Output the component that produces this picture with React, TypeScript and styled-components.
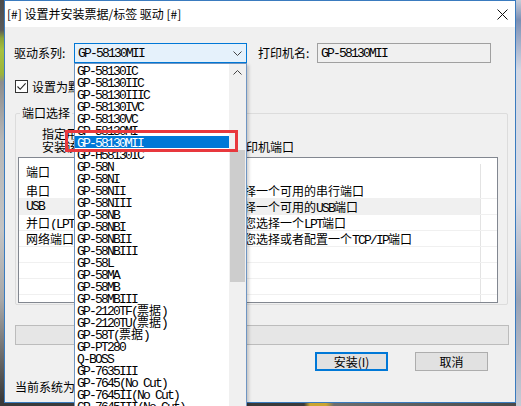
import React from 'react';
import styled, { createGlobalStyle } from 'styled-components';

const GlobalStyle = createGlobalStyle`
    body {
        margin: 0;
        background: #2f2f2f;
        font-family: "Noto Sans CJK SC", "Noto Sans", sans-serif;
        font-size: 12px;
        color: #000;
    }
`;

const UI = `"Noto Sans CJK SC", "Noto Sans", sans-serif`;
const MONO = `"Liberation Mono", "Noto Sans CJK SC", monospace`;

const Desktop = styled.div`
    width: 521px;
    height: 406px;
    overflow: hidden;
    display: grid;
    grid-template-columns: 4px 512px 5px;
    grid-template-rows: 403px 3px;
`;

const LeftStrip = styled.div`
    grid-row: 1 / 3;
    background: linear-gradient(
        to bottom,
        #4b4b4b 0px, #5a5a5a 30px, #8aa23a 38px, #a6c13f 50px, #9bb43b 74px,
        #8d8d8d 82px, #b7b7b7 140px, #c4c4c4 230px, #a8a8a8 300px, #3a3a3a 400px
    );
`;

const RightStrip = styled.div`
    grid-row: 1 / 3;
    grid-column: 3;
    background: linear-gradient(
        to bottom,
        #c9ced9 0px, #7a8fb5 20px, #d3d8e4 70px, #d7dbe6 200px, #9aa3b5 300px, #c6cbd6 406px
    );
`;

const BottomStrip = styled.div`
    grid-row: 2;
    grid-column: 2;
    background: linear-gradient(
        to right,
        #3a3a3a 0px, #3a3a3a 300px, #c9a431 306px, #c9a431 322px, #6d6d6d 330px, #4a4a4a 512px
    );
`;

const Window = styled.div`
    grid-row: 1;
    grid-column: 2;
    box-sizing: border-box;
    border: 1px solid #3a7bbf;
    background: #f0f0f0;
    display: flex;
    flex-direction: column;
    font-family: ${UI};
`;

const TitleBar = styled.div`
    height: 26px;
    background: #fff;
    display: flex;
    align-items: center;
    justify-content: space-between;
    padding: 0 7px 0 2px;
    line-height: 26px;
`;

const CloseIcon = () => (
    <svg width="11" height="11" viewBox="0 0 11 11">
        <path d="M0.5 0.5 L10.5 10.5 M10.5 0.5 L0.5 10.5" stroke="#111" strokeWidth="1" fill="none" />
    </svg>
);

const Body = styled.div`
    display: flex;
    flex-direction: column;
    padding: 16px 8px 0 9px;
`;

const FieldRow = styled.div`
    display: flex;
    align-items: center;
    height: 20px;
`;

const Label = styled.span<{ $w: number; $ml?: number }>`
    width: ${p => p.$w}px;
    margin-left: ${p => p.$ml || 0}px;
    line-height: 20px;
    white-space: nowrap;
`;

const Combo = styled.div`
    position: relative;
    box-sizing: border-box;
    width: 173px;
    height: 20px;
    border: 1px solid #0078d7;
    background: #e5f1fb;
    display: flex;
    align-items: center;
    justify-content: space-between;
    padding: 0 4px 0 3px;
`;

const Mono = styled.span`
    font-family: ${MONO};
    font-size: 13px;
    letter-spacing: -1.8px;
    white-space: nowrap;
`;

const Han = styled.span`
    font-family: ${UI};
    font-size: 12px;
    letter-spacing: 0;
`;

const TextBox = styled.div`
    box-sizing: border-box;
    width: 174px;
    height: 20px;
    border: 1px solid #a0a0a0;
    background: #f0f0f0;
    padding-left: 3px;
    display: flex;
    align-items: center;
`;

const CheckRow = styled.label`
    display: flex;
    align-items: center;
    gap: 4px;
    height: 13px;
    margin: 17px 0 0 1px;
    line-height: 13px;
`;

const CheckBox = styled.span`
    box-sizing: border-box;
    width: 13px;
    height: 13px;
    border: 1px solid #333;
    background: #fff;
    display: flex;
    align-items: center;
    justify-content: center;
`;

const Group = styled.fieldset`
    box-sizing: border-box;
    width: 493px;
    margin: 12px 0 0 1px;
    padding: 0 0 1px 2px;
    border: 1px solid #dcdcdc;
    border-radius: 2px;
    min-width: 0;
`;

const Legend = styled.legend`
    margin-left: 2px;
    padding: 0 2px;
    line-height: 16px;
`;

const Hint = styled.div`
    padding: 6px 0 0 24px;
    line-height: 13px;
    white-space: nowrap;
    overflow: hidden;
`;

const ListView = styled.div`
    box-sizing: border-box;
    width: 480px;
    height: 146px;
    margin-top: 4px;
    border: 1px solid #828790;
    background: #fff;
    overflow: hidden;
    font-family: ${MONO};
`;

const HeaderRow = styled.div`
    display: flex;
    height: 25px;
    padding-top: 6px;
    box-sizing: border-box;
`;

const Row = styled.div<{ $hot?: boolean }>`
    display: flex;
    height: 16px;
    box-sizing: border-box;
    border-bottom: 1px solid #f0f0f0;
    background: ${p => (p.$hot ? '#f0f0f0' : '#fff')};
`;

const Cell = styled.div<{ $w: number; $last?: boolean }>`
    width: ${p => p.$w}px;
    flex: none;
    box-sizing: border-box;
    padding-left: ${p => (p.$last ? 0 : 7)}px;
    line-height: 15px;
    white-space: nowrap;
    overflow: hidden;
    ${p => p.$last && 'border-left: 1px solid #e3e3e3; background: #fff;'}
`;

const StatusBox = styled.div`
    box-sizing: border-box;
    width: 494px;
    height: 20px;
    margin: 20px 0 0 1px;
    border: 1px solid #bcbcbc;
    background: #e6e6e6;
`;

const ButtonRow = styled.div`
    display: flex;
    gap: 27px;
    margin-top: 7px;
    padding-left: 301px;
`;

const Button = styled.button<{ $default?: boolean }>`
    box-sizing: border-box;
    width: 73px;
    height: 19px;
    padding: 0;
    font-family: ${UI};
    font-size: 12px;
    line-height: 15px;
    background: #e1e1e1;
    border: 1px solid ${p => (p.$default ? '#0078d7' : '#adadad')};
    box-shadow: ${p => (p.$default ? 'inset 0 0 0 1px #0078d7' : 'none')};
    color: #000;
`;

const Footer = styled.div`
    margin: 8px 0 0 1px;
    line-height: 16px;
    white-space: nowrap;
`;

/* the open drop-down of the combo */
const DropList = styled.div`
    position: absolute;
    top: 19px;
    left: -1px;
    box-sizing: border-box;
    width: 173px;
    height: 360px;
    border: 1px solid #6f95c2;
    background: #fff;
    display: flex;
    box-shadow: 2px 2px 3px rgba(0, 0, 0, 0.18);
    z-index: 5;
`;

const Items = styled.div`
    flex: 1;
    display: flex;
    flex-direction: column;
`;

const Item = styled.div<{ $sel?: boolean }>`
    height: 12px;
    line-height: 12px;
    padding-left: 2px;
    background: ${p => (p.$sel ? '#0078d7' : 'transparent')};
    color: ${p => (p.$sel ? '#fff' : '#000')};
`;

const ScrollBar = styled.div`
    width: 17px;
    flex: none;
    background: #f0f0f0;
    display: flex;
    flex-direction: column;
`;

const ArrowBtn = styled.div`
    height: 17px;
    display: flex;
    align-items: center;
    justify-content: center;
`;

const Thumb = styled.div`
    margin: 69px 0 0 1px;
    width: 15px;
    height: 132px;
    background: #cdcdcd;
`;

const Mark = styled.div`
    position: absolute;
    left: -10px;
    top: 66px;
    box-sizing: border-box;
    width: 173px;
    height: 22px;
    border: 3px solid #e8383d;
    pointer-events: none;
`;

const cjk = (s: string) =>
    s.split(/([\u3000-\u9fff\uff00-\uffef]+)/).map((part, i) =>
        /[\u3000-\u9fff\uff00-\uffef]/.test(part) ? <Han key={i}>{part}</Han> : part
    );

const models = [
    'GP-58130IC', 'GP-58130IIC', 'GP-58130IIIC', 'GP-58130IVC', 'GP-58130VC', 'GP-58130MI',
    'GP-58130MII', 'GP-H58130IC', 'GP-58N', 'GP-58NI', 'GP-58NII', 'GP-58NIII', 'GP-58NB',
    'GP-58NBI', 'GP-58NBII', 'GP-58NBIII', 'GP-58L', 'GP-58MA', 'GP-58MB', 'GP-58MBIII',
    'GP-2120TF(票据)', 'GP-2120TU(票据)', 'GP-58T(票据)', 'GP-PT280', 'Q-BOSS', 'GP-7635III',
    'GP-7645(No Cut)', 'GP-7645II(No Cut)', 'GP-7645III(No Cut)', 'GP-7645IV(No Cut)',
];

const ports = [
    ['串口', '请选择一个可用的串行端口'],
    ['USB', '请选择一个可用的USB端口'],
    ['并口(LPT)', '将为您选择一个LPT端口'],
    ['网络端口', '将为您选择或者配置一个TCP/IP端口'],
];

const COLS = [194, 267, 17];

const Chevron = ({ up }: { up?: boolean }) => (
    <svg width="9" height="5" viewBox="0 0 9 5">
        <path d={up ? 'M0.5 4.5 L4.5 0.5 L8.5 4.5' : 'M0.5 0.5 L4.5 4.5 L8.5 0.5'} stroke="#444" strokeWidth="1" fill="none" />
    </svg>
);

const App = () => {
    return (
        <Desktop>
            <GlobalStyle />
            <LeftStrip />
            <Window>
                <TitleBar>
                    <span>[#] 设置并安装票据/标签 驱动 [#]</span>
                    <CloseIcon />
                </TitleBar>
                <Body>
                    <FieldRow>
                        <Label $w={60}>驱动系列:</Label>
                        <Combo>
                            <Mono>GP-58130MII</Mono>
                            <Chevron />
                            <DropList>
                                <Items>
                                    {models.map(m => (
                                        <Item key={m} $sel={m === 'GP-58130MII'}>
                                            <Mono>{cjk(m)}</Mono>
                                        </Item>
                                    ))}
                                </Items>
                                <ScrollBar>
                                    <ArrowBtn><Chevron up /></ArrowBtn>
                                    <Thumb />
                                </ScrollBar>
                                <Mark />
                            </DropList>
                        </Combo>
                        <Label $w={59} $ml={11}>打印机名:</Label>
                        <TextBox><Mono>GP-58130MII</Mono></TextBox>
                    </FieldRow>

                    <CheckRow>
                        <CheckBox>
                            <svg width="11" height="11" viewBox="0 0 11 11">
                                <path d="M1.5 5.5 L4.2 8.3 L9.6 2.4" stroke="#222" strokeWidth="1.1" fill="none" />
                            </svg>
                        </CheckBox>
                        设置为默认打印机
                    </CheckRow>

                    <Group>
                        <Legend>端口选择</Legend>
                        <Hint>
                            指定用于安装该驱动的打印机端口<br />
                            安装该票据驱动程序时所需要使用的打印机端口
                        </Hint>
                        <ListView>
                            <HeaderRow>
                                <Cell $w={COLS[0]}><Mono>{cjk('端口')}</Mono></Cell>
                                <Cell $w={COLS[1]}><Mono>{cjk('描述')}</Mono></Cell>
                                <Cell $w={COLS[2]} $last />
                            </HeaderRow>
                            {ports.map(([port, desc], i) => (
                                <Row key={port} $hot={i === 1}>
                                    <Cell $w={COLS[0]}><Mono>{cjk(port)}</Mono></Cell>
                                    <Cell $w={COLS[1]}><Mono>{cjk(desc)}</Mono></Cell>
                                    <Cell $w={COLS[2]} $last />
                                </Row>
                            ))}
                            {[0, 1, 2, 3, 4].map(i => (
                                <Row key={'e' + i}>
                                    <Cell $w={COLS[0]} />
                                    <Cell $w={COLS[1]} />
                                    <Cell $w={COLS[2]} $last />
                                </Row>
                            ))}
                        </ListView>
                    </Group>

                    <StatusBox />

                    <ButtonRow>
                        <Button $default>安装(I)</Button>
                        <Button>取消</Button>
                    </ButtonRow>

                    <Footer>当前系统为: Windows 10 64位</Footer>
                </Body>
            </Window>
            <RightStrip />
            <BottomStrip />
        </Desktop>
    );
};

export default App;
